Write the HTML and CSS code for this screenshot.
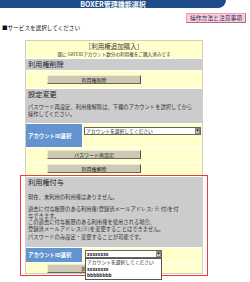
FILE: index.html
```html
<!DOCTYPE html>
<html lang="ja">
<head>
<meta charset="utf-8">
<link rel="stylesheet" href="styles.css">
</head>
<body>
<div class="header">BOXER管理機能選択</div>
<div class="help-row"><span class="help-btn">操作方法と注意事項</span></div>
<div class="lead">■サービスを選択してください</div>

<div class="main">
  <div class="row yellow intro">
    <div class="intro-title">［利用権追加購入］</div>
    <div class="intro-sub">既に GATEIDアカウント数分の利用権をご購入済みです</div>
  </div>
  <div class="row gray sec-head h-del">利用権削除</div>
  <div class="row yellow btn-row pad4"><span class="btn">利用権削除</span></div>
  <div class="row gray sec-block">
    <div class="sec-title">設定変更</div>
    <p class="note">パスワード再設定、利用権解除は、下欄のアカウントを選択してから<br>操作してください。</p>
  </div>
  <div class="row pick">
    <div class="label">アカウントID選択</div>
    <div class="pick-cell">
      <div class="select wide"><span class="sel-text">アカウントを選択してください</span><span class="arrow">▼</span></div>
    </div>
  </div>
  <div class="row yellow btn-row pad2"><span class="btn">パスワード再設定</span></div>
  <div class="row yellow btn-row pad1"><span class="btn">利用権解除</span></div>

  <div class="highlight">
    <div class="row gray sec-block grant">
      <div class="sec-title">利用権付与</div>
      <p class="note now">現在、未利用の利用権はありません。</p>
      <p class="note">過去に付与履歴のある利用権(登録済メールアドレス: ※ 付)を付<br>与できます。<br>この過去に付与履歴のある利用権を使用される場合、<br>登録済メールアドレス(※)を変更することはできません。</p>
      <p class="note last">パスワードのみ設定・変更することが可能です。</p>
    </div>
    <div class="row pick pick2">
      <div class="label">アカウントID選択</div>
      <div class="pick-cell">
        <div class="select narrow"><span class="sel-text bold">xxxxxxxx</span><span class="arrow">▼</span></div>
        <div class="dropdown">
          <div class="opt">アカウントを選択してください</div>
          <div class="opt bold">xxxxxxxx</div>
          <div class="opt bold">bbbbbbbb</div>
        </div>
      </div>
    </div>
    <div class="row yellow btn-row last-row"><span class="btn">利用権付与</span></div>
  </div>
</div>
</body>
</html>
```

FILE: styles.css
```css
* { box-sizing: border-box; }
html, body { margin: 0; padding: 0; background: #fff; }
body {
  width: 250px;
  height: 282px;
  overflow: hidden;
  font-family: "Noto Sans CJK JP", "Noto Sans", sans-serif;
  color: #222;
}
.header {
  width: 226px;
  height: 8px;
  background: #1f4d8b;
  border-radius: 0 0 8px 0;
  color: #fff;
  font-size: 7px;
  font-weight: bold;
  line-height: 8px;
  text-align: center;
}
.help-row {
  display: flex;
  justify-content: flex-end;
  padding: 5px 4px 0 0;
}
.help-btn {
  display: block;
  width: 60px;
  height: 10px;
  background: #ffccdd;
  border: 1px solid #e8a0b4;
  border-right-color: #b07080;
  border-bottom-color: #b07080;
  color: #223366;
  font-size: 5.8px;
  line-height: 8px;
  text-align: center;
  white-space: nowrap;
}
.lead {
  margin: 2px 0 0 2px;
  font-size: 5.6px;
  line-height: 6px;
  color: #111;
  white-space: nowrap;
}
.main {
  margin: 9px 0 0 25px;
  width: 178px;
  display: flex;
  flex-direction: column;
  gap: 1px;
  border: 1px solid #d0d0c0;
  border-top: 0;
  background: #fff;
}
.row { width: 100%; }
.yellow { background: #ffffcc; }
.gray { background: #cccccc; }
.intro {
  height: 18px;
  text-align: center;
  padding-top: 1px;
  border-top: 1px solid #d0d0c0;
}
.intro-title {
  font-size: 6.5px;
  line-height: 9px;
  color: #333;
}
.intro-sub {
  font-size: 4.6px;
  line-height: 6px;
  color: #333;
  white-space: nowrap;
}
.sec-head {
  height: 11px;
  font-size: 7.2px;
  line-height: 11px;
  padding-left: 2px;
  color: #222;
}
.btn-row {
  display: flex;
  justify-content: center;
  padding-right: 40px;
}
.pad4 { height: 17px; padding-top: 4px; }
.pad2 { height: 14px; padding-top: 2px; }
.pad1 { height: 12px; padding-top: 1px; }
.btn {
  display: block;
  width: 94px;
  height: 9px;
  background: #cdc9b2;
  border: 1px solid #eeeadb;
  border-right: 1.5px solid #555;
  border-bottom: 1.5px solid #666;
  font-size: 5px;
  line-height: 7px;
  text-align: center;
  color: #222;
}
.sec-block {
  height: 34px;
  padding: 1px 0 0 2px;
}
.sec-title {
  font-size: 7.2px;
  line-height: 9px;
  color: #222;
}
.note {
  margin: 5px 0 0;
  font-size: 5.3px;
  line-height: 6.8px;
  color: #333;
  white-space: nowrap;
}
.pick {
  display: flex;
  height: 23px;
  gap: 1px;
}
.label {
  width: 56px;
  flex: none;
  background: #6394cf;
  color: #fff;
  font-size: 5.4px;
  font-weight: bold;
  display: flex;
  align-items: center;
  padding-left: 2px;
  white-space: nowrap;
}
.pick-cell {
  flex: 1;
  background: #ffffcc;
  padding: 3px 0 0 1px;
  position: relative;
}
.select {
  height: 8px;
  background: #fff;
  border: 1px solid #666;
  display: flex;
  align-items: center;
  justify-content: space-between;
  padding-left: 1px;
}
.select.wide { width: 117px; }
.select.narrow { width: 77px; margin-left: 1px; }
.sel-text {
  font-size: 4.8px;
  line-height: 6px;
  color: #222;
  white-space: nowrap;
}
.bold { font-weight: bold; }
.arrow {
  width: 5px;
  height: 6px;
  background: #d4d0c8;
  border: 0.5px solid #888;
  font-size: 3px;
  line-height: 5px;
  text-align: center;
  color: #111;
}
.highlight {
  position: relative;
  display: flex;
  flex-direction: column;
  gap: 1px;
  margin-top: 1px;
}
.highlight::before {
  content: "";
  position: absolute;
  left: -6px;
  right: -6px;
  top: -2px;
  bottom: -3px;
  border: 1.5px solid #ee3a3a;
  pointer-events: none;
}
.grant {
  height: 70px;
  padding-top: 1px;
}
.grant .note.now { margin-top: 7px; }
.grant .note { margin-top: 5px; }
.grant .note.last { margin-top: 1px; }
.pick2 { height: 14px; }
.pick2 .pick-cell { padding-top: 2px; }
.dropdown {
  position: absolute;
  left: 2px;
  top: 10px;
  width: 77px;
  background: #fff;
  border: 1px solid #555;
  z-index: 2;
  padding: 0 1px;
}
.opt {
  font-size: 4.8px;
  line-height: 6.5px;
  color: #222;
  white-space: nowrap;
}
.last-row {
  height: 10px;
  padding-top: 1px;
}
```
